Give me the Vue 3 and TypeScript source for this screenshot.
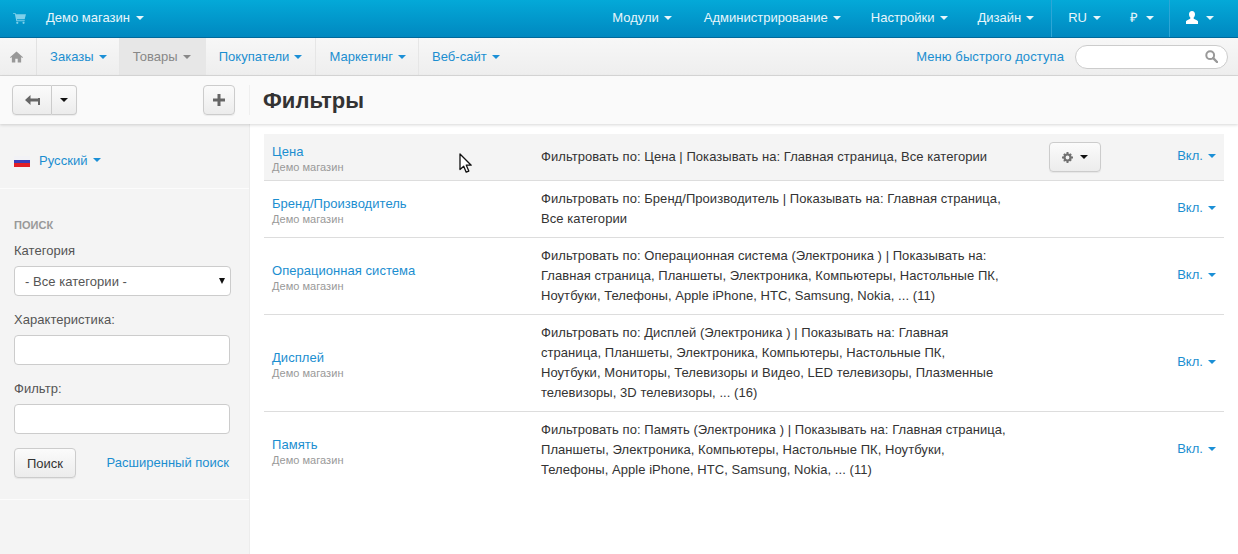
<script setup lang="ts">
const topLeft = ['Модули', 'Администрирование', 'Настройки', 'Дизайн']
const navItems = [
  { label: 'Заказы', active: false },
  { label: 'Товары', active: true },
  { label: 'Покупатели', active: false },
  { label: 'Маркетинг', active: false },
  { label: 'Веб-сайт', active: false },
]
const rows = [
  { name: 'Цена', hover: true, desc: 'Фильтровать по: Цена | Показывать на: Главная страница, Все категории' },
  { name: 'Бренд/Производитель', hover: false, desc: 'Фильтровать по: Бренд/Производитель | Показывать на: Главная страница, Все категории' },
  { name: 'Операционная система', hover: false, desc: 'Фильтровать по: Операционная система (Электроника ) | Показывать на: Главная страница, Планшеты, Электроника, Компьютеры, Настольные ПК, Ноутбуки, Телефоны, Apple iPhone, HTC, Samsung, Nokia, ... (11)' },
  { name: 'Дисплей', hover: false, desc: 'Фильтровать по: Дисплей (Электроника ) | Показывать на: Главная страница, Планшеты, Электроника, Компьютеры, Настольные ПК, Ноутбуки, Мониторы, Телевизоры и Видео, LED телевизоры, Плазменные телевизоры, 3D телевизоры, ... (16)' },
  { name: 'Память', hover: false, desc: 'Фильтровать по: Память (Электроника ) | Показывать на: Главная страница, Планшеты, Электроника, Компьютеры, Настольные ПК, Ноутбуки, Телефоны, Apple iPhone, HTC, Samsung, Nokia, ... (11)' },
]
</script>

<template>
  <div class="page">
    <header class="topbar">
      <div class="brand">
        <svg class="cart" width="13" height="12" viewBox="0 0 14 13"><path d="M0 1h2.600l.4 1.400H14l-1.400 5.400H4.200l.3 1.200h8.200v1H3.600L1.900 2H0z" fill="#7fd0ea"/><circle cx="4.600" cy="11.700" r="1.200" fill="#7fd0ea"/><circle cx="11.400" cy="11.700" r="1.200" fill="#7fd0ea"/></svg>
        <span class="brand-name">Демо магазин<i class="caret light"></i></span>
      </div>
      <nav class="top-right">
        <a v-for="t in topLeft" :key="t" class="top-link main">{{ t }}<i class="caret light"></i></a>
        <div class="top-sep"></div>
        <a class="top-link lang-code">RU<i class="caret light"></i></a>
        <a class="top-link cur"><span class="rub">₽</span><i class="caret light"></i></a>
        <div class="top-sep"></div>
        <a class="top-link user">
          <svg width="12" height="13" viewBox="0 0 12 13"><path d="M6 0c1.900 0 3 1.300 3 3.300 0 1.500-.6 2.800-1.400 3.500 0 .8.300 1.100 1.200 1.500 1.500.6 2.700 1.200 3.200 2V13H0v-2.700c.5-.8 1.700-1.400 3.200-2 .9-.4 1.200-.7 1.200-1.500C3.600 6.100 3 4.800 3 3.300 3 1.300 4.100 0 6 0z" fill="#fff"/></svg>
          <i class="caret light"></i>
        </a>
      </nav>
    </header>

    <div class="navbar">
      <div class="home">
        <svg width="13" height="12" viewBox="0 0 14 12"><path d="M7 0l7 6.200-.8.9L12 6v6H8.300V8H5.700v4H2V6L.8 7.100 0 6.200z" fill="#999"/></svg>
      </div>
      <a v-for="n in navItems" :key="n.label" class="nav-item" :class="{ active: n.active }">{{ n.label }}<i class="caret" :class="n.active ? 'grey' : 'blue'"></i></a>
      <div class="nav-spacer"></div>
      <a class="quick">Меню быстрого доступа</a>
      <div class="search-pill">
        <svg width="13" height="13" viewBox="0 0 13 13"><circle cx="5.200" cy="5.200" r="3.900" fill="none" stroke="#999" stroke-width="2"/><path d="M8.200 8.200l3.800 3.800" stroke="#999" stroke-width="2.400" stroke-linecap="round"/></svg>
      </div>
    </div>

    <div class="toolbar">
      <div class="tool-left">
        <div class="btn-group">
          <button class="btn back">
            <svg width="15" height="10" viewBox="0 0 15 10"><path d="M5.500 0v3.500H15v3H5.500V10L0 5z" fill="#666"/><path d="M13 3h2v7h-2z" fill="#666"/></svg>
          </button>
          <button class="btn drop"><i class="caret dark"></i></button>
        </div>
        <button class="btn plus">
          <svg width="12" height="12" viewBox="0 0 12 12"><path d="M4.500 0h3v4.500H12v3H7.500V12h-3V7.500H0v-3h4.500z" fill="#666"/></svg>
        </button>
      </div>
      <h1 class="title">Фильтры</h1>
    </div>

    <div class="body">
      <aside class="sidebar">
        <div class="lang">
          <svg class="flag" width="16" height="11" viewBox="0 0 16 11"><rect width="16" height="4" fill="#f2f2f6"/><rect y="4" width="16" height="3" fill="#3a3fb8"/><rect y="7" width="16" height="4" fill="#e21f26"/></svg>
          <a class="lang-link">Русский<i class="caret blue near"></i></a>
        </div>
        <div class="search-panel">
          <div class="panel-title">ПОИСК</div>
          <label class="field-label first">Категория</label>
          <div class="select-wrap">
            <select class="select"><option>- Все категории -</option></select>
            <i class="caret dark select-caret"></i>
          </div>
          <label class="field-label second">Характеристика:</label>
          <input class="input" type="text" />
          <label class="field-label third">Фильтр:</label>
          <input class="input" type="text" />
          <div class="actions">
            <button class="btn submit">Поиск</button>
            <a class="adv">Расширенный поиск</a>
          </div>
        </div>
      </aside>

      <main class="content">
        <div v-for="r in rows" :key="r.name" class="row" :class="{ hover: r.hover }">
          <div class="name">
            <a class="name-link">{{ r.name }}</a>
            <div class="store">Демо магазин</div>
          </div>
          <div class="desc">{{ r.desc }}</div>
          <div class="tools">
            <button v-if="r.hover" class="btn gear">
              <svg width="11" height="11" viewBox="0 0 11 11"><circle cx="5.500" cy="5.500" r="3" fill="none" stroke="#707070" stroke-width="2.200"/><path d="M4.500 0h2v2h-2zM4.500 9h2v2h-2zM0 4.500h2v2H0zM9 4.500h2v2H9zM1.200 2.600l1.400-1.400 1 1-1.400 1.400zM7.400 8.400l1.400-1.400 1 1-1.400 1.400zM8.400 1.200l1.400 1.400-1 1-1.400-1.400zM2.600 7.400l1 1-1.400 1.400-1-1z" fill="#707070"/></svg>
              <i class="caret dark"></i>
            </button>
          </div>
          <a class="state">Вкл.<i class="caret blue"></i></a>
        </div>
      </main>
    </div>

    <svg class="pointer" width="14" height="21" viewBox="0 0 14 21"><path d="M1 1v15.500l3.700-3.300 2.500 6 2.600-1.100-2.500-5.900h4.900z" fill="#fff" stroke="#111" stroke-width="1.300" stroke-linejoin="round"/></svg>
  </div>
</template>

<style>
html, body { margin: 0; background: #fff; }
</style>

<style scoped>
.page {
  position: relative;
  width: 1238px;
  height: 554px;
  overflow: hidden;
  font-family: "Liberation Sans", Arial, sans-serif;
  font-size: 13px;
  line-height: 20px;
  letter-spacing: .04px;
  color: #333;
  display: flex;
  flex-direction: column;
}
a { cursor: pointer; }
.topbar {
  height: 37px;
  flex: none;
  background: linear-gradient(#04a9d8, #0088c0);
  border-bottom: 1px solid #00699b;
  display: flex;
  justify-content: space-between;
  color: #fff;
  letter-spacing: 0;
}
.brand { display: flex; align-items: center; padding: 0 0 2px 13px; }
.brand-name { margin-left: 20px; color: #e8f6fb; }
.top-right { display: flex; align-items: stretch; padding-right: 10px; }
.top-link { display: flex; align-items: center; padding: 0 15px 2px; color: #e8f6fb; }
.top-link.main .caret { margin-left: 5px; }
.top-link.main:first-child { padding-right: 17px; }
.top-link.main:nth-child(4) { padding-right: 17px; }
.top-link.lang-code { padding-left: 16px; padding-right: 16px; }
.rub { margin-left: -2px; margin-right: 2px; }
.top-link.user { padding-left: 16px; padding-right: 14px; }
.top-link.user .caret { margin-left: 8px; }
.top-sep { width: 1px; background: #2da6d6; }
.caret {
  display: inline-block;
  width: 0;
  height: 0;
  margin-left: 6px;
  vertical-align: middle;
  border-top: 4px solid #333;
  border-left: 4px solid transparent;
  border-right: 4px solid transparent;
}
.caret.light { border-top-color: #e8f6fb; }
.caret.blue { border-top-color: #1b8fd6; }
.caret.grey { border-top-color: #888; }
.caret.dark { border-top-color: #111; margin-left: 0; }
.caret.near { margin-left: 5px; position: relative; top: -2px; }

.navbar {
  height: 37px;
  flex: none;
  background: linear-gradient(#f7f7f7, #eeeeee);
  border-bottom: 1px solid #d9d9d9;
  display: flex;
  align-items: stretch;
}
.home { width: 26px; padding-left: 10px; border-right: 1px solid #e2e2e2; display: flex; align-items: center; box-sizing: content-box; }
.nav-item { display: flex; align-items: center; padding: 0 13px; color: #1b8ed0; border-right: 1px solid #e6e6e6; }
.nav-item:nth-child(2) { padding-right: 12px; }
.nav-item:nth-child(3) { padding-right: 14px; }
.nav-item:nth-child(5) { padding-right: 12px; }
.nav-item:nth-child(6) { border-right: 0; }
.nav-item .caret { margin-left: 5px; }
.nav-item.active { background: #e7e7e7; color: #888; border-right-color: #e7e7e7; }
.nav-spacer { flex: 1; }
.quick { display: flex; align-items: center; color: #1b8ed0; margin-right: 11px; letter-spacing: .09px; }
.search-pill {
  align-self: center;
  box-sizing: border-box;
  width: 153px;
  height: 24px;
  margin-right: 10px;
  background: #fff;
  border: 1px solid #ccc;
  border-radius: 12px;
  display: flex;
  align-items: center;
  justify-content: flex-end;
  padding-right: 9px;
}

.toolbar {
  position: relative;
  z-index: 2;
  height: 48px;
  flex: none;
  background: #fafafa;
  box-shadow: 0 1px 3px rgba(0, 0, 0, .16);
  display: flex;
  align-items: center;
}
.tool-left {
  box-sizing: border-box;
  width: 250px;
  height: 30px;
  padding: 0 14px 0 12px;
  border-right: 1px solid #efefef;
  display: flex;
  justify-content: space-between;
}
.btn {
  box-sizing: border-box;
  height: 30px;
  background: linear-gradient(#fbfbfb, #ececec);
  border: 1px solid #ccc;
  border-radius: 4px;
  box-shadow: 0 1px 1px rgba(0, 0, 0, .06);
  font-family: inherit;
  font-size: 13px;
  color: #333;
  padding: 0;
  display: flex;
  align-items: center;
  justify-content: center;
}
.btn-group { display: flex; }
.back { width: 40px; border-radius: 4px 0 0 4px; }
.drop { width: 25px; border-left: 0; border-radius: 0 4px 4px 0; }
.plus { width: 32px; }
.title { margin: 2px 0 0 13px; font-size: 22px; line-height: 30px; font-weight: bold; color: #333; }

.body { flex: 1; display: flex; min-height: 0; }
.sidebar {
  box-sizing: border-box;
  width: 250px;
  flex: none;
  background: #f4f4f4;
  border-right: 1px solid #ececec;
}
.lang {
  height: 65px;
  box-sizing: border-box;
  border-bottom: 1px solid #fcfcfc;
  padding: 27px 0 0 14px;
  display: flex;
  align-items: flex-start;
}
.flag { margin-top: 5px; }
.lang-link { margin-left: 9px; color: #1b8ed0; }
.search-panel {
  box-sizing: border-box;
  height: 311px;
  padding: 26px 19px 0 14px;
  border-bottom: 1px solid #fcfcfc;
  display: flex;
  flex-direction: column;
}
.panel-title { font-size: 11px; font-weight: bold; color: #999; line-height: 20px; }
.field-label { line-height: 20px; color: #555; }
.field-label.first { margin-top: 6px; }
.field-label.second { margin-top: 14px; }
.field-label.third { margin-top: 14px; }
.select-wrap { position: relative; width: 217px; margin-top: 5px; height: 30px; }
.select {
  box-sizing: border-box;
  width: 217px;
  height: 30px;
  padding: 0 10px;
  appearance: none;
  background: #fff;
  border: 1px solid #ccc;
  border-radius: 4px;
  font-family: inherit;
  font-size: 13px;
  letter-spacing: .04px;
  color: #555;
}
.select-caret { position: absolute; right: 6px; top: 12px; border-top-width: 6px; border-left-width: 3.500px; border-right-width: 3.500px; }
.input {
  box-sizing: border-box;
  width: 216px;
  height: 30px;
  margin-top: 5px;
  background: #fff;
  border: 1px solid #ccc;
  border-radius: 4px;
}
.actions { margin-top: 14px; display: flex; align-items: center; justify-content: space-between; padding-right: 1px; }
.submit { width: 62px; }
.adv { color: #1b8ed0; letter-spacing: 0; }

.content { flex: 1; padding: 10px 14px 0 14px; min-width: 0; }
.row {
  display: flex;
  align-items: center;
  padding: 5px 8px;
  border-bottom: 1px solid #ddd;
}
.row:last-child { border-bottom: 0; }
.row.hover { background: #f4f4f4; }
.name { width: 269px; flex: none; padding: 1px 0; }
.name-link { display: block; line-height: 20px; color: #1b8ed0; }
.store { font-size: 11px; line-height: 10px; color: #999; }
.desc { width: 465.5px; flex: none; padding: 3px 0; letter-spacing: .05px; }
.tools { width: 43px; flex: none; margin-left: 42.5px; padding: 3px 0; display: flex; }
.gear { width: 52px; flex: none; gap: 7px; }
.state { margin-left: auto; margin-bottom: 2px; color: #1b8ed0; white-space: nowrap; }
.state .caret { margin-left: 5px; position: relative; top: -1px; }

.pointer { position: absolute; left: 459px; top: 153px; z-index: 5; }
</style>
